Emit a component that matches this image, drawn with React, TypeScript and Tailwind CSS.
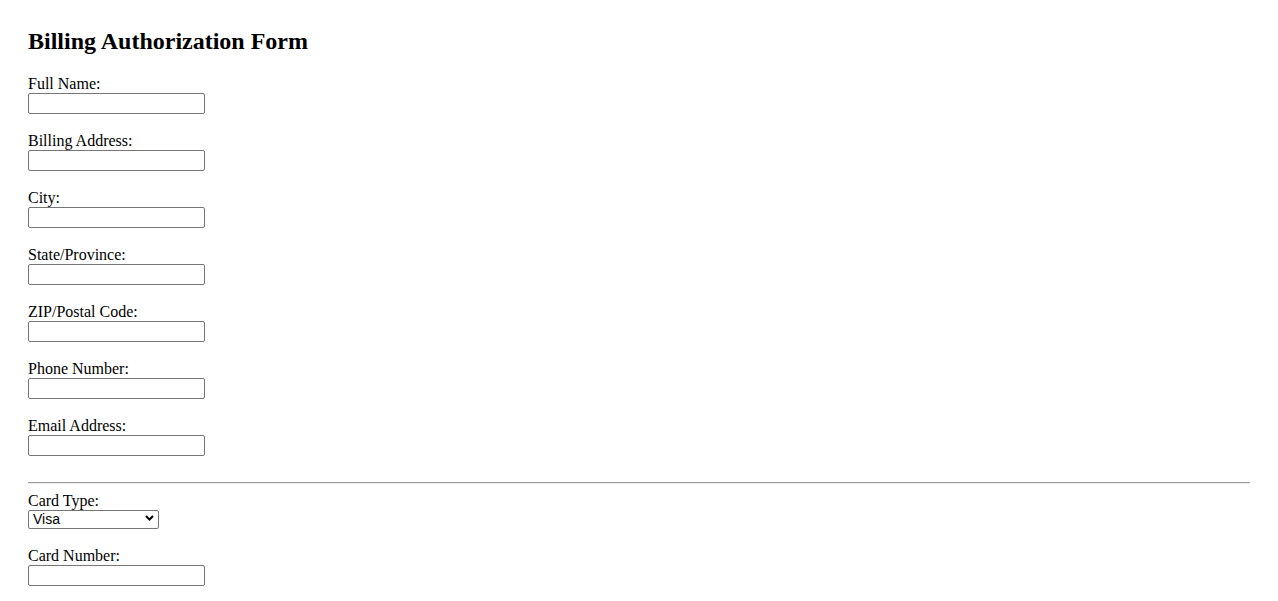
import React from "react";

const fields = [
  "Full Name:",
  "Billing Address:",
  "City:",
  "State/Province:",
  "ZIP/Postal Code:",
  "Phone Number:",
  "Email Address:",
];

function Field({ label }: { label: string }) {
  return (
    <div className="mb-[18px]">
      <label className="block text-[16px] leading-[18px]">{label}</label>
      <input
        type="text"
        className="block w-[177px] h-[21px] border border-[#767676] rounded-[2px] bg-white px-[2px] text-[13.33px]"
      />
    </div>
  );
}

export default function App() {
  return (
    <div className="min-h-[601px] bg-white px-[28px] pt-[28px] font-['Liberation_Serif','Times_New_Roman',serif] text-black">
      <h2 className="text-[24px] font-bold leading-[27px] mb-[20px]">
        Billing Authorization Form
      </h2>
      {fields.map((f) => (
        <Field key={f} label={f} />
      ))}
      <div className="mt-[26px] mb-[8px] border-t border-b border-t-[#9a9a9a] border-b-[#eeeeee]" />
      <div className="mb-[18px]">
        <label className="block text-[16px] leading-[18px]">Card Type:</label>
        <div className="relative w-[131px] h-[19px]">
          <select className="appearance-none block w-[131px] h-[19px] border border-[#767676] rounded-[2px] bg-white pl-[4px] pr-[16px] text-[14px] leading-[17px] font-['Liberation_Sans',Arial,sans-serif] text-black">
            <option>Visa</option>
            <option>MasterCard</option>
            <option>American Express</option>
            <option>Discover</option>
          </select>
          <svg
            className="absolute right-[5px] top-[5px] pointer-events-none"
            width="9"
            height="6"
            viewBox="0 0 9 6"
          >
            <path d="M1 1 L4.5 4.5 L8 1" fill="none" stroke="#000" strokeWidth="2" />
          </svg>
        </div>
      </div>
      <div className="mb-[18px]">
        <label className="block text-[16px] leading-[18px]">Card Number:</label>
        <input
          type="text"
          className="block w-[177px] h-[21px] border border-[#767676] rounded-[2px] bg-white px-[2px] text-[13.33px]"
        />
      </div>
    </div>
  );
}
